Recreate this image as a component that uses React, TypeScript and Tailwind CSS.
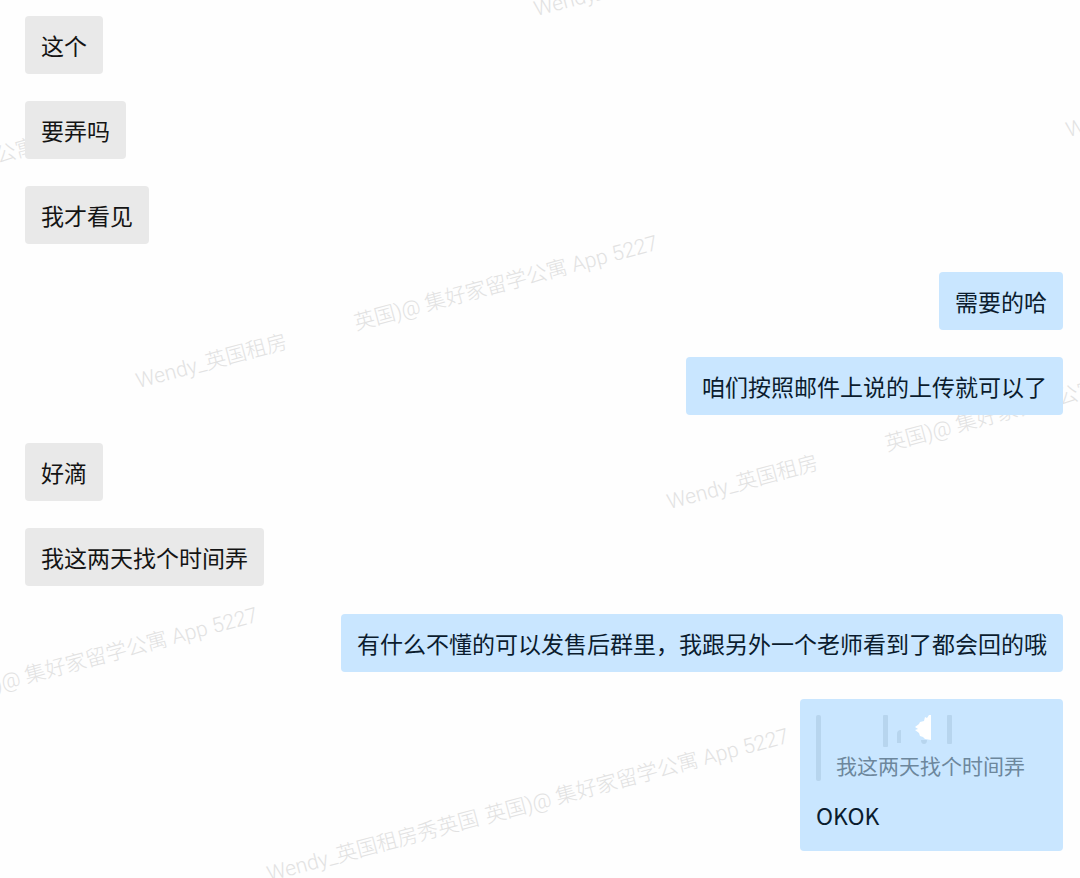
import { FC } from "react";

interface Message {
    text: string;
    quote?: string;
}

interface MessageGroup {
    id: number;
    mine: boolean;
    messages: Message[];
}

interface WatermarkProps {
    text: string;
    place: string;
}

const groups: MessageGroup[] = [
    {
        id: 1,
        mine: false,
        messages: [{ text: "这个" }, { text: "要弄吗" }, { text: "我才看见" }],
    },
    {
        id: 2,
        mine: true,
        messages: [{ text: "需要的哈" }, { text: "咱们按照邮件上说的上传就可以了" }],
    },
    {
        id: 3,
        mine: false,
        messages: [{ text: "好滴" }, { text: "我这两天找个时间弄" }],
    },
    {
        id: 4,
        mine: true,
        messages: [
            { text: "有什么不懂的可以发售后群里，我跟另外一个老师看到了都会回的哦" },
            { text: "OKOK", quote: "我这两天找个时间弄" },
        ],
    },
];

const watermarks: WatermarkProps[] = [
    { text: "Wendy_英国租房", place: "left-[538px] -top-[5px]" },
    { text: "Wendy_英国租房", place: "left-[1070px] top-[116px]" },
    { text: "Wendy_英国租房", place: "left-[140px] top-[367px]" },
    { text: "Wendy_英国租房", place: "left-[671px] top-[488px]" },
    { text: "Wendy_英国租房秀英国", place: "left-[271px] top-[860px]" },
    { text: "英国)@ 集好家留学公寓 App 5227", place: "-left-[173px] top-[188px]" },
    { text: "英国)@ 集好家留学公寓 App 5227", place: "left-[358px] top-[309px]" },
    { text: "英国)@ 集好家留学公寓 App 5227", place: "left-[889px] top-[430px]" },
    { text: "英国)@ 集好家留学公寓 App 5227", place: "-left-[42px] top-[681px]" },
    { text: "英国)@ 集好家留学公寓 App 5227", place: "left-[489px] top-[802px]" },
];

const Watermark: FC<WatermarkProps> = ({ text, place }) => (
    <span
        className={`absolute ${place} origin-bottom-left -rotate-15 whitespace-nowrap font-[Roboto,'Noto_Sans_CJK_SC',sans-serif] text-[21px] leading-[28px] font-light text-[#e2e2e2]`}
    >
        {text}
    </span>
);

// What is left of the sender's name after it was wiped out
const ErasedName: FC = () => (
    <svg className="ml-[47px] block" width="70" height="34" viewBox="0 0 70 34" aria-hidden="true">
        <rect x="0" y="0" width="5" height="32" rx="1" fill="#b7d5ee" />
        <path d="M14 19q0-4 4-4v13h-4z" fill="#b7d5ee" />
        <path d="M38 25h6q0 4-3 4t-3-4z" fill="#b7d5ee" />
        <path
            d="M48 0h-2l-2 3-2-1-1 4-4 1-1 2-4 3 3 2-3 1 4 3 1 3 3 1 2 2 6 1z"
            fill="#ffffff"
        />
        <rect x="64" y="0" width="5" height="29" rx="1" fill="#b7d5ee" />
    </svg>
);

const Bubble: FC<Message & { mine: boolean }> = ({ text, quote, mine }) => (
    <div
        className={`rounded px-4 pt-[13px] text-[23px] leading-[32px] ${quote ? "pb-5" : "pb-[13px]"} ${
            mine ? "bg-[#c9e6ff] text-[#0b1c2e]" : "bg-[#e9e9e9] text-[#141414]"
        }`}
    >
        {quote && (
            <blockquote className="relative mt-[3px] mb-[18px] pr-[22px] pl-5 text-[21px] leading-8 text-[#6d879c]">
                <span className="absolute inset-y-0 left-0 w-[5px] rounded-xs bg-[#b7d5ee]" />
                <ErasedName />
                <p>{quote}</p>
            </blockquote>
        )}
        <p>{text}</p>
    </div>
);

export default function App() {
    return (
        <main className="relative min-h-screen overflow-hidden bg-[#fefefe] font-['Noto_Sans_CJK_SC',sans-serif]">
            <div className="absolute inset-0" aria-hidden="true">
                {watermarks.map((item) => (
                    <Watermark key={item.place} text={item.text} place={item.place} />
                ))}
            </div>
            <div className="relative flex flex-col gap-7 pt-4 pr-[17px] pb-[27px] pl-[25px]">
                {groups.map((group) => (
                    <section
                        key={group.id}
                        className={`flex flex-col gap-[27px] ${group.mine ? "items-end" : "items-start"}`}
                    >
                        {group.messages.map((message) => (
                            <Bubble key={message.text} mine={group.mine} {...message} />
                        ))}
                    </section>
                ))}
            </div>
        </main>
    );
}
